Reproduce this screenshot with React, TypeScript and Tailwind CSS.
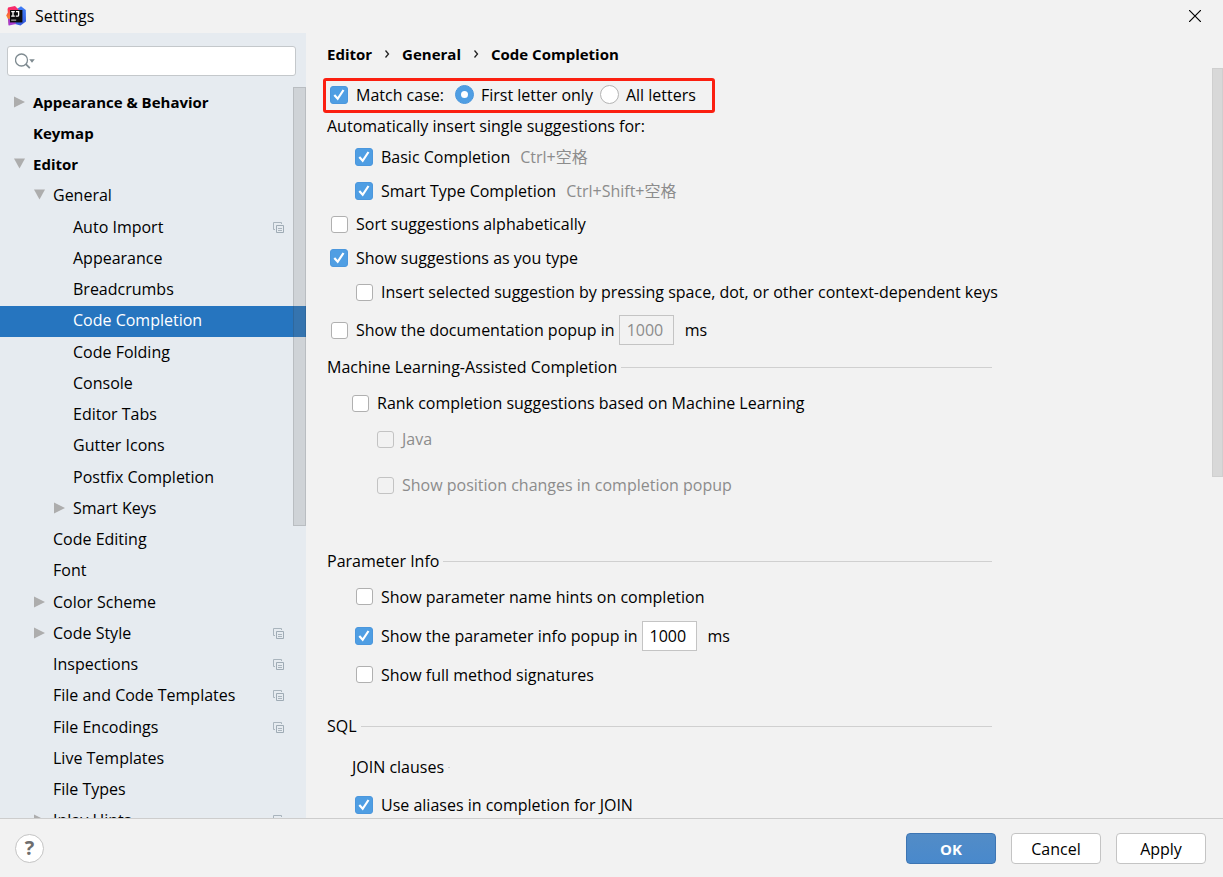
import { useState } from 'react';
import type { ReactNode } from 'react';

interface TreeItem {
  label: string;
  depth: number;
  arrow?: 'open' | 'closed';
  project?: boolean;
}

const TREE: TreeItem[] = [
  { label: 'Appearance & Behavior', depth: 0, arrow: 'closed' },
  { label: 'Keymap', depth: 0 },
  { label: 'Editor', depth: 0, arrow: 'open' },
  { label: 'General', depth: 1, arrow: 'open' },
  { label: 'Auto Import', depth: 2, project: true },
  { label: 'Appearance', depth: 2 },
  { label: 'Breadcrumbs', depth: 2 },
  { label: 'Code Completion', depth: 2 },
  { label: 'Code Folding', depth: 2 },
  { label: 'Console', depth: 2 },
  { label: 'Editor Tabs', depth: 2 },
  { label: 'Gutter Icons', depth: 2 },
  { label: 'Postfix Completion', depth: 2 },
  { label: 'Smart Keys', depth: 2, arrow: 'closed' },
  { label: 'Code Editing', depth: 1 },
  { label: 'Font', depth: 1 },
  { label: 'Color Scheme', depth: 1, arrow: 'closed' },
  { label: 'Code Style', depth: 1, arrow: 'closed', project: true },
  { label: 'Inspections', depth: 1, project: true },
  { label: 'File and Code Templates', depth: 1, project: true },
  { label: 'File Encodings', depth: 1, project: true },
  { label: 'Live Templates', depth: 1 },
  { label: 'File Types', depth: 1 },
  { label: 'Inlay Hints', depth: 1, arrow: 'closed', project: true },
];

const INDENT = ['pl-[13px]', 'pl-[33px]', 'pl-[53px]'];

function Logo() {
  return (
    <svg className="size-5" viewBox="0 0 20 20">
      <defs>
        <linearGradient id="pink" x1="0" y1="0" x2="0" y2="1">
          <stop offset="0" stopColor="#fb2a5c" />
          <stop offset="0.5" stopColor="#f9802c" />
          <stop offset="1" stopColor="#a83bc6" />
        </linearGradient>
        <linearGradient id="blue" x1="0" y1="0" x2="0" y2="1">
          <stop offset="0" stopColor="#3f7df5" />
          <stop offset="1" stopColor="#3558dd" />
        </linearGradient>
      </defs>
      <path fill="url(#blue)" d="M11 3l4-2.7L19.8 4 20 15.5 14.5 19.5 9 18z" />
      <path fill="#f62a6b" d="M2 1.5L9 0l4 4-3 7-8-3z" />
      <path fill="url(#pink)" d="M1.5 2.5L5 3l1 14-3.5 2.5L2 13 .2 9.5l1.6-3z" />
      <path fill="#a63bd0" d="M2 13h6l2 5-7 1.5z" />
      <path fill="#0b0b0d" d="M4 4h12.4v12.4H4z" />
      <path stroke="#fff" strokeWidth="1.3" fill="none" d="M5.2 5.6h3.6M7 5.6v4.6M5.2 10.2h3.6M10 5.6h2.6v3.6q0 1-1 1H9.8" />
      <path fill="#b8b8b8" d="M5.2 13.6h5v1.1h-5z" />
    </svg>
  );
}

function Arrow({ dir }: { dir?: 'open' | 'closed' }) {
  return (
    <svg className="mr-2 size-3 shrink-0" viewBox="0 0 12 12" fill="#adadad">
      {dir === 'closed' && <path d="M1 0.5v11l11-5.5z" />}
      {dir === 'open' && <path d="M1 0.5h11l-5.5 10z" />}
    </svg>
  );
}

function ProjectIcon() {
  return (
    <svg className="ml-auto size-3 shrink-0" viewBox="0 0 12 12" fill="none">
      <path stroke="#a9b4bd" d="M3 8.5H1.5v-7h8V3" />
      <path stroke="#9fabb5" d="M4.5 4.5h7v7h-7z" />
      <path stroke="#a9b4bd" d="M6 7.5h4M6 9.5h4" />
    </svg>
  );
}

function Chevron() {
  return (
    <svg className="mx-3 h-[9px] w-[6px]" viewBox="0 0 6 9" fill="none" stroke="#222" strokeWidth="1.3">
      <path d="M1.5 0.5l3 3.5-3 3.5" />
    </svg>
  );
}

interface CheckProps {
  children: ReactNode;
  checked?: boolean;
  disabled?: boolean;
}

function Check({ children, checked, disabled }: CheckProps) {
  return (
    <label className={`flex items-center ${disabled ? 'text-[#8c8c8c]' : ''}`}>
      <span className="relative mr-2 flex size-[18px] shrink-0 items-center justify-center">
        <input
          type="checkbox"
          defaultChecked={checked}
          disabled={disabled}
          className="peer size-[17px] appearance-none rounded-[3px] border border-[#b0b0b0] bg-white checked:size-[18px] checked:border-[#4b97dd] checked:bg-[#4f9ee3] disabled:border-[#c3c3c3] disabled:bg-transparent"
        />
        <svg className="pointer-events-none absolute inset-0 hidden peer-checked:block" viewBox="0 0 18 18" fill="none">
          <path stroke="#fff" strokeWidth="2.2" d="M4.3 9l3.4 3.8L13.5 4" />
        </svg>
      </span>
      <span>{children}</span>
    </label>
  );
}

function Radio({ children, checked }: CheckProps) {
  return (
    <label className="flex items-center gap-[7px]">
      <span className="relative flex size-[19px] items-center justify-center">
        <input
          type="radio"
          name="match-case"
          defaultChecked={checked}
          className="peer size-[19px] appearance-none rounded-full border border-[#b4b4b4] bg-white checked:border-[#4b97dd] checked:bg-[#4f9ee3]"
        />
        <span className="pointer-events-none absolute hidden size-[7px] rounded-full bg-white peer-checked:block" />
      </span>
      <span>{children}</span>
    </label>
  );
}

function DelayField({ label, disabled }: { label: string; disabled?: boolean }) {
  return (
    <>
      <input
        type="text"
        aria-label={label}
        defaultValue="1000"
        disabled={disabled}
        className="ml-1 h-[30px] w-[55px] border border-[#c4c4c4] bg-white px-[7px] disabled:bg-transparent disabled:text-[#8c8c8c]"
      />
      <span className="ml-[11px]">ms</span>
    </>
  );
}

function SectionTitle({ children }: { children: ReactNode }) {
  return (
    <h2 className="flex h-8 items-center gap-1">
      {children}
      <span className="h-px flex-1 bg-[#d0d0d0]" />
    </h2>
  );
}

function Shortcut({ children }: { children: ReactNode }) {
  return <span className="ml-[10px] text-[#8c8c8c]">{children}</span>;
}

export default function App() {
  const [selected, setSelected] = useState('Code Completion');

  return (
    <div className="flex h-screen flex-col overflow-hidden bg-[#f2f2f2] font-['Open_Sans','Noto_Sans_CJK_SC',sans-serif] text-base leading-5 text-black">
      {/* Title bar */}
      <header className="flex h-[33px] shrink-0 items-center gap-[9px] pr-[22px] pb-0.5 pl-[6px]">
        <Logo />
        <h1>Settings</h1>
        <button aria-label="Close" className="ml-auto">
          <svg className="size-3" viewBox="0 0 12 12" stroke="#000" strokeWidth="1.2">
            <path d="M0 0l12 12M12 0L0 12" />
          </svg>
        </button>
      </header>

      <div className="flex min-h-0 flex-1">
        {/* Settings tree */}
        <aside className="relative w-[306px] shrink-0 overflow-hidden bg-[#e6ebf0]">
          <div className="pt-[13px] pr-[10px] pb-[11px] pl-[7px]">
            <div className="flex h-[30px] items-center rounded-[3px] border border-[#c4c8cb] bg-white pl-[7px]">
              <svg className="h-4 w-5 shrink-0" viewBox="0 0 20 16" fill="none">
                <circle cx="6.5" cy="7" r="6" stroke="#7f8b91" strokeWidth="1.3" />
                <path stroke="#7f8b91" strokeWidth="1.8" d="M10.8 11.2l4 4" />
                <path fill="#7f8b91" d="M14.2 6.2h5.6L17 9.8z" />
              </svg>
              <input type="text" aria-label="Search settings" className="min-w-0 flex-1 px-2 outline-none" />
            </div>
          </div>
          <ul className="grid h-[750px] auto-rows-fr">
            {TREE.map(item => (
              <li key={item.label} className="flex">
                <button
                  onClick={() => setSelected(item.label)}
                  className={`flex w-full items-center pr-[22px] pb-0.5 text-left ${INDENT[item.depth]} ${
                    item.depth === 0 ? 'text-[15px] leading-5 font-bold' : ''
                  } ${selected === item.label ? 'bg-[#2675bf] text-white' : ''}`}
                >
                  <Arrow dir={item.arrow} />
                  {item.label}
                  {item.project && <ProjectIcon />}
                </button>
              </li>
            ))}
          </ul>
          <div className="absolute top-[54px] right-0 h-[439px] w-[13px] border border-black/10 bg-[#737373]/20" />
        </aside>

        {/* Code completion page */}
        <main className="relative min-w-0 flex-1 overflow-hidden pl-[21px]">
          <nav className="flex h-[42px] items-center text-[15px] leading-5 font-bold">
            <a href="#editor">Editor</a>
            <Chevron />
            <a href="#general">General</a>
            <Chevron />
            <span>Code Completion</span>
          </nav>

          <div className="mt-[3px] -ml-1 flex h-[35px] w-[392px] items-center rounded-[3px] border-3 border-[#fb1f10] pb-0.5 pl-1">
            <Check checked>Match case:</Check>
            <div className="ml-[11px] flex items-center gap-[7px]">
              <Radio checked>First letter only</Radio>
              <Radio>All letters</Radio>
            </div>
          </div>

          <div className="w-full max-w-[665px] whitespace-nowrap">
            <p className="flex h-[27px] items-center pb-0.5">Automatically insert single suggestions for:</p>
            <div className="pl-[3px]">
              <div className="flex h-[34px] items-center pl-[25px]">
                <Check checked>Basic Completion</Check>
                <Shortcut>Ctrl+空格</Shortcut>
              </div>
              <div className="flex h-[33px] items-center pl-[25px]">
                <Check checked>Smart Type Completion</Check>
                <Shortcut>Ctrl+Shift+空格</Shortcut>
              </div>
              <div className="flex h-[34px] items-center">
                <Check>Sort suggestions alphabetically</Check>
              </div>
              <div className="flex h-[34px] items-center">
                <Check checked>Show suggestions as you type</Check>
              </div>
              <div className="flex h-[34px] items-center pl-[25px]">
                <Check>Insert selected suggestion by pressing space, dot, or other context-dependent keys</Check>
              </div>
              <div className="flex h-[42px] items-center">
                <Check>Show the documentation popup in</Check>
                <DelayField label="Documentation popup delay" disabled />
              </div>
            </div>

            <SectionTitle>Machine Learning-Assisted Completion</SectionTitle>
            <div className="pl-6">
              <div className="flex h-10 items-center">
                <Check>Rank completion suggestions based on Machine Learning</Check>
              </div>
              <div className="flex h-8 items-center pl-[25px]">
                <Check disabled>Java</Check>
              </div>
              <div className="mt-[14px] flex h-8 items-center pl-[25px]">
                <Check disabled>Show position changes in completion popup</Check>
              </div>
            </div>

            <div className="mt-11">
              <SectionTitle>Parameter Info</SectionTitle>
              <div className="pl-7">
                <div className="flex h-[39px] items-center">
                  <Check>Show parameter name hints on completion</Check>
                </div>
                <div className="flex h-[39px] items-center">
                  <Check checked>Show the parameter info popup in</Check>
                  <DelayField label="Parameter info popup delay" />
                </div>
                <div className="flex h-[39px] items-center">
                  <Check>Show full method signatures</Check>
                </div>
              </div>
            </div>

            <div className="mt-4">
              <SectionTitle>SQL</SectionTitle>
              <h3 className="flex h-[50px] items-center gap-1 pl-[25px]">
                JOIN clauses
                <span className="h-px w-0.5 bg-[#d0d0d0]" />
              </h3>
              <div className="flex h-[26px] items-center pl-7">
                <Check checked>Use aliases in completion for JOIN</Check>
              </div>
            </div>
          </div>

          <div className="absolute top-[35px] right-0 h-[409px] w-[11px] border border-[#cfcfcf] bg-[#d8d8d8]" />
        </main>
      </div>

      {/* Dialog buttons */}
      <footer className="flex h-[59px] shrink-0 items-center gap-[15px] border-t border-[#cdcdcd] pr-[17px] pl-[15px]">
        <button
          aria-label="Help"
          className="mr-auto flex size-[29px] items-center justify-center rounded-full border border-[#c4c4c4] bg-white text-xl font-bold text-[#6e6e6e]"
        >
          ?
        </button>
        <button className="h-[31px] w-[90px] rounded-[4px] border border-[#3d75b3] bg-linear-to-b from-[#528cc7] to-[#4989cc] pt-0.5 text-[15px] font-bold text-white">
          OK
        </button>
        <button className="h-[31px] w-[90px] rounded-[4px] border border-[#c4c4c4] bg-white pt-0.5">Cancel</button>
        <button className="h-[31px] w-[90px] rounded-[4px] border border-[#c4c4c4] bg-white pt-0.5">Apply</button>
      </footer>
    </div>
  );
}
